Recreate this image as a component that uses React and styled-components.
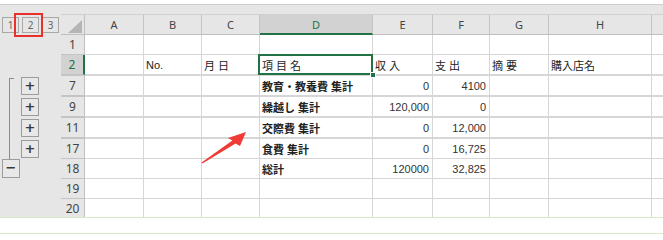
import React from 'react';
import styled, { createGlobalStyle } from 'styled-components';

const GlobalStyle = createGlobalStyle`
	html, body {
		margin: 0;
		padding: 0;
		background: #fff;
	}
	body {
		font-family: "Liberation Sans", "Noto Sans CJK JP", sans-serif;
	}
	* {
		box-sizing: border-box;
	}
`;

const GREEN = '#217346';

// column I is mostly off screen, its letter is not visible
const COLS = [
	{ key: 'A', label: 'A', width: 59 },
	{ key: 'B', label: 'B', width: 58 },
	{ key: 'C', label: 'C', width: 58 },
	{ key: 'D', label: 'D', width: 113 },
	{ key: 'E', label: 'E', width: 60 },
	{ key: 'F', label: 'F', width: 57 },
	{ key: 'G', label: 'G', width: 59 },
	{ key: 'H', label: 'H', width: 103 },
	{ key: 'I', label: '', width: 80 }
];

const ROWS = [
	{ n: 1, cells: {} },
	{
		n: 2,
		selected: true,
		cells: { B: 'No.', C: '月 日', D: '項 目 名', E: '収 入', F: '支 出', G: '摘 要', H: '購入店名' }
	},
	{ n: 7, thick: true, outline: 'start', cells: { D: '教育・教養費 集計', E: '0', F: '4100' } },
	{ n: 9, thick: true, outline: 'mid', cells: { D: '繰越し 集計', E: '120,000', F: '0' } },
	{ n: 11, thick: true, outline: 'mid', cells: { D: '交際費 集計', E: '0', F: '12,000' } },
	{ n: 17, thick: true, outline: 'mid', cells: { D: '食費 集計', E: '0', F: '16,725' } },
	{ n: 18, outline: 'minus', cells: { D: '総計', E: '120000', F: '32,825' } },
	{ n: 19, cells: {} },
	{ n: 20, cells: {} }
];

const isNumber = (v) => /^[\d,]+$/.test(v);

export default function App() {
	return (
		<Page>
			<GlobalStyle />
			<TopStrip />
			<Frame>
				<Row $h={21}>
					<OutlineCell>
						<LevelBar>
							<LevelButton>1</LevelButton>
							<LevelButton>2</LevelButton>
							<LevelButton>3</LevelButton>
						</LevelBar>
						<RedMark />
					</OutlineCell>
					<Corner>
						<Triangle />
					</Corner>
					{COLS.map((c) => (
						<ColHead key={c.key} $w={c.width} $sel={c.key === 'D'}>
							{c.label}
						</ColHead>
					))}
				</Row>
				{ROWS.map((r) => (
					<Row key={r.n} $h={r.thick ? 21 : 20}>
						<OutlineCell>
							{r.outline === 'start' || r.outline === 'mid' ? (
								<>
									<Bracket $start={r.outline === 'start'} />
									<PlusButton>+</PlusButton>
								</>
							) : null}
							{r.outline === 'minus' ? <MinusButton>−</MinusButton> : null}
						</OutlineCell>
						<RowHead $sel={r.selected} $thick={r.thick}>
							{r.n}
						</RowHead>
						{COLS.map((c) => {
							const v = r.cells[c.key];
							const num = v && isNumber(v);
							return (
								<Cell
									key={c.key}
									$w={c.width}
									$thick={r.thick}
									$right={num}
									$bold={c.key === 'D' && r.n > 2}
								>
									{v}
									{r.selected && c.key === 'D' ? (
										<Selection>
											<FillHandle />
										</Selection>
									) : null}
								</Cell>
							);
						})}
					</Row>
				))}
			</Frame>
			<Footer />
			<Arrow viewBox="0 0 663 240" width="663" height="240">
				<polygon
					points="246,132 240,146 235.6,143.4 202.4,163.6 201.6,162.4 232.4,140.6 228,138"
					fill="#ef3a36"
				/>
			</Arrow>
		</Page>
	);
}

const Page = styled.div`
	position: relative;
	width: 663px;
	height: 240px;
	overflow: hidden;
	background: #fff;
`;

const TopStrip = styled.div`
	height: 5px;
	border-bottom: 1px solid #cdcdcd;
	background: #fff;
`;

const Frame = styled.div`
	height: 212px;
	padding-top: 9px;
	background: #e6e6e6;
	overflow: hidden;
`;

const Row = styled.div`
	display: flex;
	height: ${(p) => p.$h}px;
`;

const OutlineCell = styled.div`
	position: relative;
	flex: none;
	width: 61px;
	display: flex;
	align-items: flex-start;
`;

const LevelBar = styled.div`
	display: flex;
	gap: 3px;
	padding: 3px 0 0 2px;
`;

const LevelButton = styled.div`
	width: 17px;
	height: 16px;
	border: 1px solid #a8a8a8;
	background: #e6e6e6;
	color: #666;
	font-family: "Noto Sans", sans-serif;
	font-size: 10px;
	line-height: 14px;
	text-align: center;
`;

const RedMark = styled.div`
	position: absolute;
	left: 14px;
	top: -1px;
	width: 29px;
	height: 24px;
	border: 2px solid #e8302c;
`;

const Bracket = styled.div`
	flex: none;
	align-self: stretch;
	width: 5px;
	margin-left: 9px;
	margin-top: ${(p) => (p.$start ? 3 : 0)}px;
	border-left: 1px solid #8c8c8c;
	border-top: ${(p) => (p.$start ? '1px solid #8c8c8c' : 'none')};
`;

const OutlineButton = styled.div`
	width: 18px;
	height: 18px;
	border: 1px solid #9c9c9c;
	background: #e8e8e8;
	color: #3a3a3a;
	font-family: "DejaVu Sans", sans-serif;
	font-size: 13px;
	font-weight: bold;
	line-height: 15px;
	text-align: center;
`;

const PlusButton = styled(OutlineButton)`
	margin: 2px 0 0 7px;
`;

const MinusButton = styled(OutlineButton)`
	margin: 0 0 0 2px;
	height: 19px;
`;

const Corner = styled.div`
	flex: none;
	width: 24px;
	display: flex;
	align-items: flex-end;
	justify-content: flex-end;
	padding: 0 2px 1px 0;
	border-right: 1px solid #bfbfbf;
	border-bottom: 1px solid #bfbfbf;
	border-top: 1px solid #d0d0d0;
`;

const Triangle = styled.div`
	width: 14px;
	height: 13px;
	background: #b5b5b5;
	clip-path: polygon(100% 0, 100% 100%, 0 100%);
`;

const ColHead = styled.div`
	flex: none;
	width: ${(p) => p.$w}px;
	display: flex;
	align-items: center;
	justify-content: center;
	background: ${(p) => (p.$sel ? '#d2d2d2' : '#e6e6e6')};
	color: ${(p) => (p.$sel ? GREEN : '#444')};
	border-top: 1px solid #d0d0d0;
	border-right: 1px solid #c4c4c4;
	border-bottom: ${(p) => (p.$sel ? `2px solid ${GREEN}` : '1px solid #bfbfbf')};
	font-family: "Noto Sans", sans-serif;
	font-size: 11px;
`;

const RowHead = styled.div`
	flex: none;
	width: 24px;
	display: flex;
	align-items: center;
	justify-content: center;
	background: ${(p) => (p.$sel ? '#d2d2d2' : '#e6e6e6')};
	color: ${(p) => (p.$sel ? GREEN : '#444')};
	border-top: ${(p) => (p.$thick ? '1px solid #c4c4c4' : 'none')};
	border-right: ${(p) => (p.$sel ? `2px solid ${GREEN}` : '1px solid #bfbfbf')};
	border-bottom: 1px solid #c4c4c4;
	font-family: "Noto Sans", sans-serif;
	font-size: 12px;
`;

const Cell = styled.div`
	position: relative;
	flex: none;
	width: ${(p) => p.$w}px;
	display: flex;
	align-items: center;
	justify-content: ${(p) => (p.$right ? 'flex-end' : 'flex-start')};
	padding: 0 3px 0 2px;
	background: #fff;
	border-top: ${(p) => (p.$thick ? '1px solid #d6d6d6' : 'none')};
	border-right: 1px solid #d6d6d6;
	border-bottom: 1px solid #d6d6d6;
	color: ${(p) => (p.$right ? '#333' : '#222')};
	font-size: 11px;
	font-weight: ${(p) => (p.$bold ? 'bold' : 'normal')};
	white-space: nowrap;
`;

const Selection = styled.div`
	position: absolute;
	top: -1px;
	left: -2px;
	right: -1px;
	bottom: -1px;
	border: 2px solid ${GREEN};
	z-index: 2;
`;

const FillHandle = styled.div`
	position: absolute;
	right: -5px;
	bottom: -5px;
	width: 6px;
	height: 6px;
	background: ${GREEN};
	border: 1px solid #fff;
`;

const Footer = styled.div`
	height: 17px;
	border-top: 1px solid #d8e9c8;
	border-bottom: 1px solid #d8e9c8;
	background: #fff;
`;

const Arrow = styled.svg`
	position: absolute;
	left: 0;
	top: 0;
	pointer-events: none;
	z-index: 5;
`;
